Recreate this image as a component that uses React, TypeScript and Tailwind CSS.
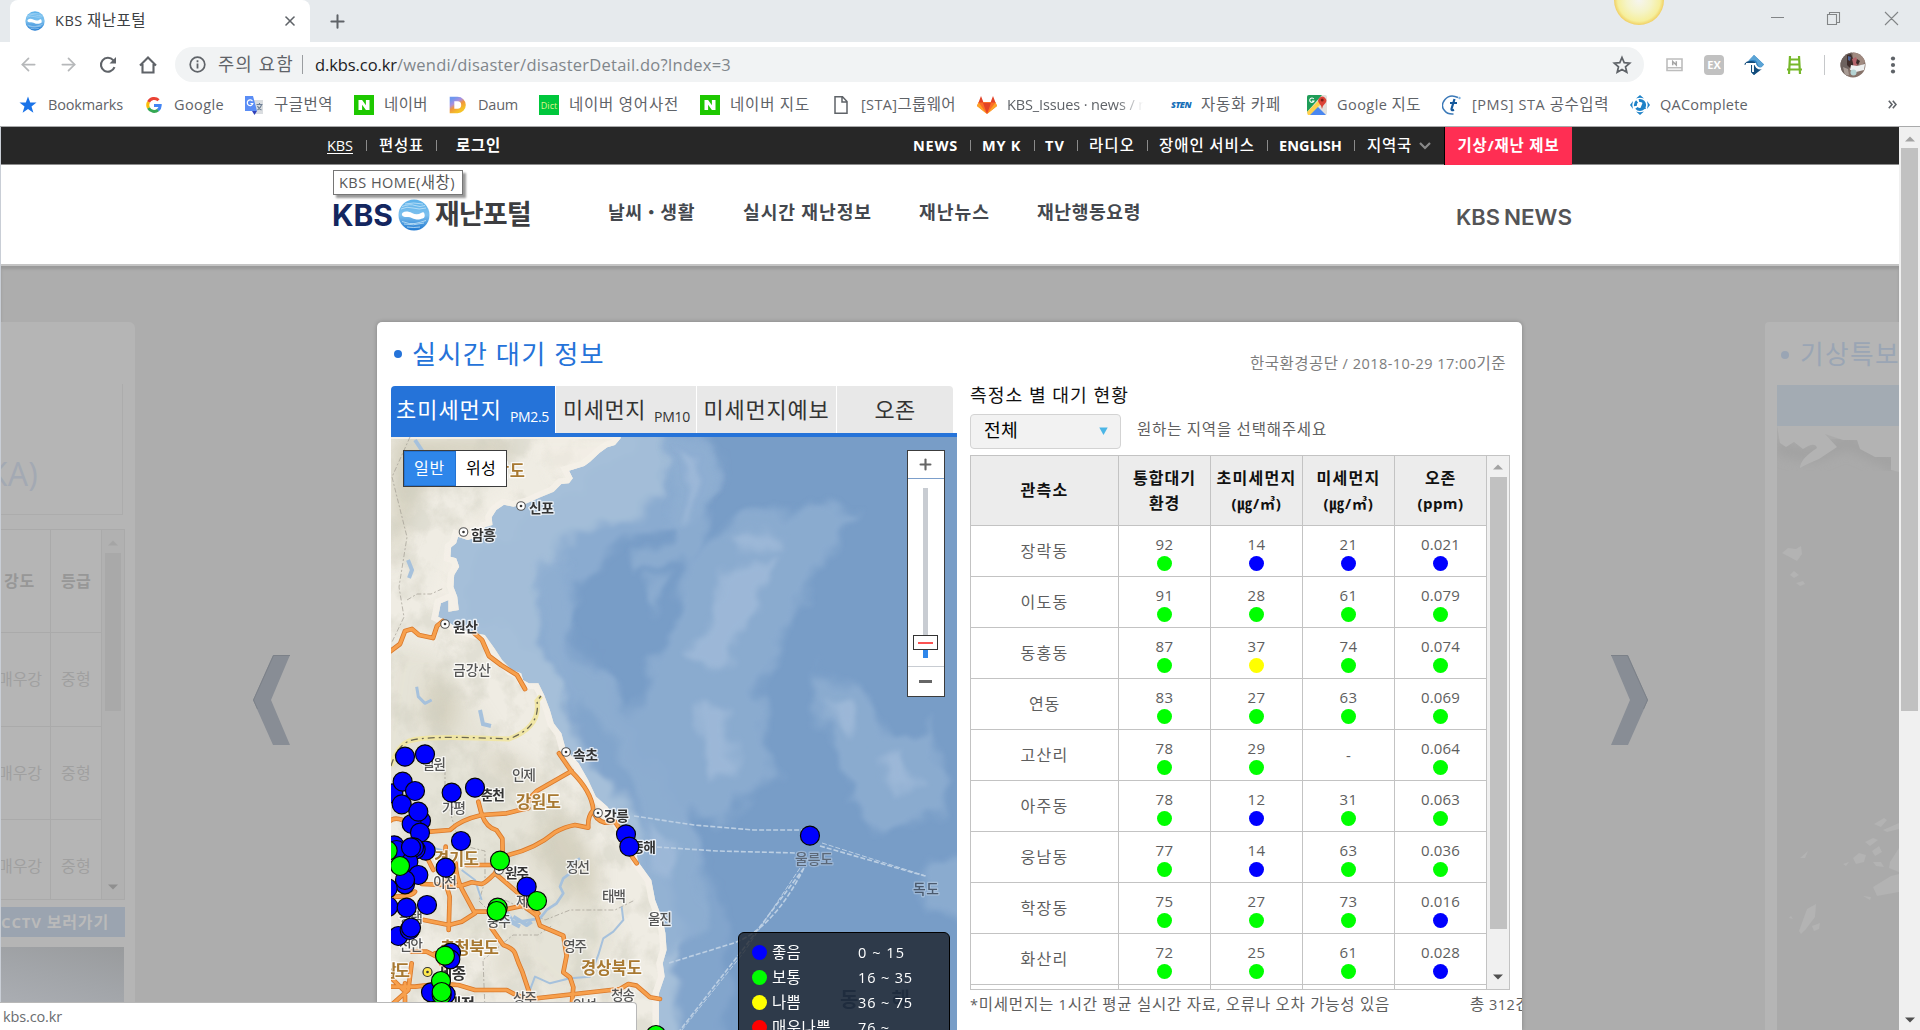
import React, { useLayoutEffect, useRef, useState } from "react";
import { ArrowLeft, ArrowRight, X, Plus } from "lucide-react";

/* Single line of text whose tracking is adjusted so that it spans exactly `w` pixels.
   Hangul runs are set slightly larger than the Latin ones. */
function Fit({ w, children, className = "" }: { w: number; children: string; className?: string }) {
  const ref = useRef<HTMLSpanElement>(null);
  const [ls, setLs] = useState(0);
  useLayoutEffect(() => {
    if (ref.current) {
      const natural = ref.current.getBoundingClientRect().width;
      setLs((w - natural) / children.length);
    }
  }, []);
  return (
    <span className={`block shrink-0 overflow-visible whitespace-pre ${className}`} style={{ width: w }}>
      <span ref={ref} style={{ letterSpacing: ls }}>
        {children.split(/([가-힣]+)/).map((part, i) =>
          i % 2 ? (
            <span key={i} className="text-[1.070em] leading-none">
              {part}
            </span>
          ) : (
            part
          ),
        )}
      </span>
    </span>
  );
}

function Globe({ size }: { size: number }) {
  return (
    <svg width={size} height={size} viewBox="0 0 32 32" className="shrink-0">
      <defs>
        <linearGradient id="globe" x1="0" y1="0" x2="0" y2="1">
          <stop offset="0" stopColor="#5db2ea" />
          <stop offset=".5" stopColor="#7cc0ee" />
          <stop offset="1" stopColor="#1f78d0" />
        </linearGradient>
      </defs>
      <circle cx="16" cy="16" r="15.500" fill="url(#globe)" />
      <path d="M3 10q6-3 12-1t13 0M4 7.500q8-3 13-1t10 0M7 5q8-2 18 0M4 22.500q8 3 13 2t11-3M6 25q9 2 20-1M9 28q7 1 13 0" stroke="#c5e4f8" strokeWidth=".8" fill="none" />
      <path d="M5 13.500c2-1.500 6-1 9 .5s6 2 9 0c2-1.300 3-1 3.500 1 .6 2.500 0 4-2 4.500-2 .4-4 1.500-7 .8-3-.8-5-2.600-8-2.300-3 .2-5-.5-5.500-2-.3-1 0-1.800 1-2.500z" fill="#fff" />
    </svg>
  );
}

function Tri({ down = false, color = "#505050" }: { down?: boolean; color?: string }) {
  return (
    <svg width="10" height="6" viewBox="0 0 10 6" className="block shrink-0">
      <path d={down ? "M0 .5h10L5 5.500z" : "M0 5.500h10L5 .5z"} fill={color} />
    </svg>
  );
}

/* ---------- browser chrome ---------- */

function TabStrip() {
  return (
    <div className="flex h-[42px] shrink-0 bg-[#e6eaed] text-[#3c4043]">
      <div className="ml-[10px] flex h-[42px] w-[300px] items-center rounded-t-[8px] bg-white pl-[15px]">
        <Globe size={20} />
        <Fit w={91} className="ml-[10px] text-[14.500px]">KBS 재난포털</Fit>
        <X className="ml-[136px]" size={16} strokeWidth={2.400} color="#5f6368" />
      </div>
      <div className="flex h-[42px] items-center pl-[17px]">
        <Plus size={21} strokeWidth={2.300} color="#5f6368" />
      </div>
      <svg width="52" height="26" viewBox="0 0 52 26" className="ml-[1265px]">
        <defs>
          <radialGradient id="sun" gradientUnits="userSpaceOnUse" cx="26" cy="0" r="25">
            <stop offset="0" stopColor="#f6f5f0" />
            <stop offset=".5" stopColor="#f5f4c8" />
            <stop offset=".85" stopColor="#f6ef9c" />
            <stop offset="1" stopColor="#f1cf62" />
          </radialGradient>
        </defs>
        <circle cx="26" cy="0" r="25" fill="url(#sun)" />
      </svg>
      <svg width="130" height="16" viewBox="0 0 130 16" className="ml-[105px] mt-[10px]" fill="none" stroke="#828587" strokeWidth="1.100">
        <path d="M1 7.500h13M57.500 4.500h9v10h-9zM59.500 4.500v-2h10v10h-3M115 2l13 13M128 2l-13 13" />
      </svg>
    </div>
  );
}

function Toolbar() {
  return (
    <div className="flex h-[45px] shrink-0 items-center bg-white">
      <ArrowLeft className="ml-[18px]" size={21} strokeWidth={2} color="#b6b8ba" />
      <ArrowRight className="ml-[19px]" size={21} strokeWidth={2} color="#b6b8ba" />
      <svg width="20" height="20" viewBox="0 0 20 20" className="ml-[19px]">
        <path d="M16.500 12.200a7 7 0 1 1-1.300-7.100L17 7" fill="none" stroke="#5f6368" strokeWidth="2.100" />
        <path d="M18 2v6.500h-6.500z" fill="#5f6368" />
      </svg>
      <svg width="20" height="20" viewBox="0 0 20 20" className="ml-[20px]">
        <path d="M2 10.500L10 2.500l8 8M4.500 9v8.500h11V9" fill="none" stroke="#5f6368" strokeWidth="2.100" />
      </svg>
      <div className="ml-[17px] flex h-[35px] w-[1469px] items-center rounded-full bg-[#f1f3f4] pl-[14px] text-[16.500px]">
        <svg width="17" height="17" viewBox="0 0 17 17">
          <circle cx="8.500" cy="8.500" r="7.300" fill="none" stroke="#5f6368" strokeWidth="1.700" />
          <path d="M8.500 7.500v5M8.500 4.300v1.900" stroke="#5f6368" strokeWidth="1.800" />
        </svg>
        <Fit w={76} className="ml-[12px] text-[#5f6368]">주의 요함</Fit>
        <div className="ml-[8px] h-[19px] w-px bg-[#9a9da0]" />
        <Fit w={82} className="ml-[12px] text-[#202124]">d.kbs.co.kr</Fit>
        <Fit w={334} className="text-[#80868b]">/wendi/disaster/disasterDetail.do?Index=3</Fit>
        <svg width="20" height="20" viewBox="0 0 20 20" className="ml-[881px]">
          <path d="M10 2.500l2.200 5.200 5.500.5-4.200 3.600 1.300 5.500L10 14.400l-4.800 2.900 1.300-5.500L2.300 8.200l5.500-.5z" fill="none" stroke="#5f6368" strokeWidth="1.700" />
        </svg>
      </div>
      <svg width="17" height="14" viewBox="0 0 17 14" className="ml-[22px]">
        <path d="M1 1h15v11.500H1zM1 9.800h15" fill="#fff" stroke="#bdbdbd" strokeWidth="1.600" />
        <path d="M6.700 7.300V3.500L10.300 7V3.200" fill="none" stroke="#a5a5a5" strokeWidth="1.500" />
      </svg>
      <div className="ml-[21px] flex h-[20px] w-[20px] items-center justify-center rounded-[4px] bg-[#c1c1c1] text-[11px] font-bold text-white">EX</div>
      <svg width="21" height="20" viewBox="0 0 21 20" className="ml-[20px]">
        <path d="M10 0l10 9.500L10 20l-3-3V9H2z" fill="#2a7fc1" />
        <path d="M10 0l10 9.500-3 3q-3-1-4-5T4 6z" fill="#5ba4d6" />
        <path d="M7 17V9.500H0q1-1.500 3-3 8-1.500 9.500 2.500 1 5 5.500 5L10 20z" fill="#134d7c" />
        <path d="M2 9h9M9 8v9M11 8q1 6 7 5.500" stroke="#fff" strokeWidth="1.900" fill="none" />
      </svg>
      <svg width="17" height="20" viewBox="0 0 17 20" className="ml-[21px]">
        <path d="M4 1L3 19M13 1l1 18M3 4.500h11M3 9.500h11M1 14.500h15" stroke="#76b82a" strokeWidth="2.200" />
      </svg>
      <div className="ml-[21px] h-[20px] w-px bg-[#c6c8ca]" />
      <svg width="26" height="26" viewBox="0 0 26 26" className="ml-[15px]">
        <defs><clipPath id="av"><circle cx="13" cy="13" r="12.500" /></clipPath></defs>
        <g clipPath="url(#av)">
          <rect width="26" height="26" fill="#87736a" />
          <path d="M0 0h12l-5 26H0z" fill="#6d625e" />
          <path d="M13 0l6 1 7 8-5 5-8-6z" fill="#a08a80" />
          <path d="M7 3l4-1 3 7-2 9-5-5z" fill="#3e2c29" />
          <path d="M12 7l4-2 3 7-5 3z" fill="#b4636a" />
          <path d="M8 4l3 1-1 4-2-1z" fill="#4f6698" />
          <path d="M11 13l6 1 8-2-1 6-8 2-6-2z" fill="#eef0f0" />
          <path d="M17 7l3 2-2 4-2-2z" fill="#3b2b28" />
          <circle cx="13.500" cy="20.500" r="3" fill="#b5d3d3" />
          <path d="M3 15l5 2 1 6-4 1z" fill="#a89b94" />
        </g>
      </svg>
      <svg width="6" height="18" viewBox="0 0 6 18" className="ml-[24px]" fill="#5f6368">
        <circle cx="3" cy="2.500" r="2.100" /><circle cx="3" cy="9" r="2.100" /><circle cx="3" cy="15.500" r="2.100" />
      </svg>
    </div>
  );
}

const NaverIcon = () => (
  <svg width="20" height="20" viewBox="0 0 20 20">
    <rect width="20" height="20" fill="#1ec800" />
    <path d="M4.500 15V5h3.600l3.800 5.300V5h3.600v10h-3.600L8.100 9.700V15z" fill="#fff" />
  </svg>
);

const bookmarks: { icon: React.ReactNode; label: string; w: number; fade?: boolean; gap?: string }[] = [
  {
    icon: <svg width="20" height="20" viewBox="0 0 20 20"><path d="M10 1.500l2.200 6h6.300l-5 3.900 1.900 6.400L10 14l-5.400 3.800 1.900-6.400-5-3.900h6.300z" fill="#1a73e8" /></svg>,
    label: "Bookmarks", w: 75,
  },
  {
    icon: (
      <svg width="20" height="20" viewBox="0 0 20 20" fill="none" strokeWidth="3">
        <path d="M14.500 5.200A6.200 6.200 0 0 0 4.500 7" stroke="#ea4335" />
        <path d="M4.500 7a6.500 6.500 0 0 0 0 6" stroke="#fbbc05" />
        <path d="M4.500 13a6.200 6.200 0 0 0 9.700 1.800" stroke="#34a853" />
        <path d="M14 15a6 6 0 0 0 2.200-4.500H10" stroke="#4285f4" />
      </svg>
    ),
    label: "Google", w: 50,
  },
  {
    icon: (
      <svg width="20" height="20" viewBox="0 0 20 20">
        <path d="M8 5h11v14h-8z" fill="#dadde0" />
        <path d="M1 1h8l4 15H1z" fill="#5a8df5" />
        <path d="M8 16h5l-2.500 4z" fill="#3040b8" />
        <path d="M8.500 6.300A2.800 2.800 0 1 0 8.800 8.500H6.500" fill="none" stroke="#fff" strokeWidth="1.200" />
        <path d="M12.500 9.500h6M15.500 8v1.500M17.500 10q-1 3-4 5M13.500 11q1 3 4 4" fill="none" stroke="#6d7f95" strokeWidth="1.100" />
      </svg>
    ),
    label: "구글번역", w: 59, gap: "-ml-px",
  },
  { icon: <NaverIcon />, label: "네이버", w: 44 },
  {
    icon: (
      <svg width="20" height="20" viewBox="0 0 20 20">
        <defs><linearGradient id="daum" x1="0" y1="0" x2=".6" y2="1"><stop offset="0" stopColor="#6f97ee" /><stop offset=".35" stopColor="#a98fe0" /><stop offset=".6" stopColor="#f0953f" /><stop offset="1" stopColor="#f5c227" /></linearGradient></defs>
        <path d="M4 4h5.500a6 6 0 0 1 0 12H4z" fill="none" stroke="url(#daum)" strokeWidth="4.600" />
      </svg>
    ),
    label: "Daum", w: 40, gap: "-ml-px",
  },
  {
    icon: (
      <div className="flex h-[20px] w-[20px] items-end justify-center bg-[linear-gradient(#e8d94c,#e8d94c)_1px_0/4px_5px_no-repeat,#00c73c] bg-[#00c73c] pb-[4px] text-[9px] leading-[10px] text-[#dff58a]">Dict</div>
    ),
    label: "네이버 영어사전", w: 110,
  },
  { icon: <NaverIcon />, label: "네이버 지도", w: 80 },
  {
    icon: <svg width="20" height="20" viewBox="0 0 20 20"><path d="M4 1.800h7.500L16 6.500v11.700H4zM11 2v5h5" fill="none" stroke="#5f6368" strokeWidth="1.500" /></svg>,
    label: "[STA]그룹웨어", w: 95,
  },
  {
    icon: (
      <svg width="20" height="20" viewBox="0 0 20 20">
        <path d="M10 19L0 11 1.500 7h17L20 11z" fill="#fc6d26" />
        <path d="M10 19L6 8h8z" fill="#e24329" />
        <path d="M1.500 7.500L4 1l2.500 6.500zM13.500 7.500L16 1l2.500 6.500z" fill="#e24329" />
        <path d="M0 11l1.500-3.500L10 19zM20 11l-1.500-3.500L10 19z" fill="#fca326" />
      </svg>
    ),
    label: "KBS_Issues · news / n", w: 140, fade: true,
  },
  {
    icon: <div className="flex h-[20px] w-[20px] items-center"><Fit w={20} className="text-[9px] font-extrabold italic text-[#1670b8]">STEN</Fit></div>,
    label: "자동화 카페", w: 80, gap: "ml-[3px]",
  },
  {
    icon: (
      <svg width="20" height="20" viewBox="0 0 20 20">
        <rect width="20" height="20" rx="2" fill="#e2e0dc" />
        <path d="M0 2q0-2 2-2h13L0 17z" fill="#1f9d58" />
        <path d="M2 20l8-9 9 9z" fill="#4a87f0" />
        <path d="M0 17L12 5l3 3L3 20H1z" fill="#ffd04b" />
        <path d="M15 14q-1-4-3-6a4 4 0 1 1 6.500 0Q16 10 15 14z" fill="#dc4437" />
        <circle cx="15.200" cy="5" r="1.500" fill="#7d1f17" />
        <path d="M6.800 4A2.200 2.200 0 1 0 7 6H5" fill="none" stroke="#fff" strokeWidth="1.100" />
      </svg>
    ),
    label: "Google 지도", w: 84, gap: "ml-[5px]",
  },
  {
    icon: (
      <svg width="20" height="20" viewBox="0 0 20 20">
        <path d="M16 2.500Q8-1.500 3 4.500t-.5 11q3 4 9 3.500" fill="none" stroke="#3b79b8" strokeWidth="1.500" />
        <path d="M12.500 4L9.500 14q-.3 2 2.500.8M8 8h7" fill="none" stroke="#15599c" strokeWidth="2.200" />
        <circle cx="17.500" cy="3" r="1.200" fill="#7cb0df" />
      </svg>
    ),
    label: "[PMS] STA 공수입력", w: 137,
  },
  {
    icon: (
      <svg width="20" height="20" viewBox="0 0 20 20" fill="#1d82c8">
        <path d="M10 0l4 3.500q-4-1.500-8 0zM10 20l4-3.500q-4 1.500-8 0zM0 10l3-4q-1.500 4 0 8zM20 10l-3-4q1.500 4 0 8z" />
        <circle cx="10" cy="10" r="4.600" fill="none" stroke="#1d82c8" strokeWidth="3" strokeDasharray="11 2 5 2" />
        <path d="M10 14l3-7 3 7z" />
      </svg>
    ),
    label: "QAComplete", w: 88,
  },
];

function BookmarkBar() {
  return (
    <div className="flex h-[40px] shrink-0 items-center gap-[21px] border-b border-[#a9aaab] bg-white pb-[4px] pl-[18px] text-[14.500px] text-[#5f6368]">
      {bookmarks.map((b, i) => (
        <div key={i} className={`flex shrink-0 items-center gap-[10px] ${b.gap ?? ""} ${b.fade ? "[mask-image:linear-gradient(to_right,#000_82%,transparent_98%)]" : ""}`}>
          <div className="flex w-[20px] shrink-0 justify-center">{b.icon}</div>
          <Fit w={b.w}>{b.label}</Fit>
        </div>
      ))}
      <svg width="9" height="9" viewBox="0 0 9 9" className="ml-[119px]"><path d="M.8.8l3.200 3.700L.8 8.200M4.800.8L8 4.500 4.800 8.200" fill="none" stroke="#5f6368" strokeWidth="1.600" /></svg>
    </div>
  );
}

/* ---------- site header ---------- */

function Sep({ className = "" }: { className?: string }) {
  return <div className={`h-[11px] w-px bg-[#8b8b8b] ${className}`} />;
}

function GlobalBar() {
  return (
    <div className="flex h-[38px] shrink-0 items-center border-b border-[#8d8d8d] bg-[#272727] text-[14.500px] text-white">
      <Fit w={26} className="ml-[326px] underline underline-offset-2">KBS</Fit>
      <Sep className="ml-[13px]" />
      <Fit w={45} className="ml-[12px] font-medium">편성표</Fit>
      <Sep className="ml-[12px]" />
      <Fit w={45} className="ml-[19px] font-bold">로그인</Fit>
      <div className="ml-[412px] flex items-center font-bold">
        <Fit w={45}>NEWS</Fit>
        <Sep className="ml-[12px]" />
        <Fit w={39} className="ml-[11px]">MY K</Fit>
        <Sep className="ml-[13px]" />
        <Fit w={20} className="ml-[10px]">TV</Fit>
        <Sep className="ml-[12px]" />
        <Fit w={46} className="ml-[11px] font-medium">라디오</Fit>
        <Sep className="ml-[12px]" />
        <Fit w={96} className="ml-[11px] font-medium">장애인 서비스</Fit>
        <Sep className="ml-[12px]" />
        <Fit w={63} className="ml-[11px]">ENGLISH</Fit>
        <Sep className="ml-[12px]" />
        <Fit w={45} className="ml-[12px] font-medium">지역국</Fit>
        <svg width="12" height="8" viewBox="0 0 12 8" className="ml-[7px]"><path d="M1 1l5 5 5-5" fill="none" stroke="#8a8a8a" strokeWidth="2.200" /></svg>
      </div>
      <div className="-mb-px ml-[13px] flex h-[38px] w-[128px] items-center justify-center self-start border-l border-black bg-[#ff2e53] font-bold">
        <Fit w={102}>기상/재난 제보</Fit>
      </div>
    </div>
  );
}

function SiteHeader() {
  return (
    <div className="relative flex h-[101px] shrink-0 items-center border-b-2 border-[#c4c4c4] bg-white text-[17px] font-medium text-[#44484e]">
      <div className="ml-[331px] flex items-center">
        <svg width="62" height="30" viewBox="0 0 62 30" className="mt-[2px] overflow-visible">
          <text x="0" y="24.500" fontFamily="Inter, Roboto, sans-serif" fontWeight="700" fontSize="30" textLength="61" lengthAdjust="spacingAndGlyphs" fill="#13265f">KBS</text>
        </svg>
        <div className="ml-[4px]"><Globe size={32} /></div>
        <Fit w={96} className="ml-[5px] text-[25px] font-bold text-[#3c3d40]">재난포털</Fit>
      </div>
      <Fit w={87} className="-mt-[4px] ml-[77px] font-bold">날씨・생활</Fit>
      <Fit w={129} className="-mt-[4px] ml-[48px] font-bold">실시간 재난정보</Fit>
      <Fit w={71} className="-mt-[4px] ml-[47px] font-bold">재난뉴스</Fit>
      <Fit w={104} className="-mt-[4px] ml-[47px] font-bold">재난행동요령</Fit>
      <svg width="118" height="24" viewBox="0 0 118 24" className="ml-[315px] mt-[4px] overflow-visible">
        <g fontFamily="Inter, Roboto, sans-serif" fontWeight="600" fontSize="21.500" fill="#545456">
          <text x="0" y="19.500" textLength="44" lengthAdjust="spacingAndGlyphs">KBS</text>
          <text x="48" y="19.500" textLength="68" lengthAdjust="spacingAndGlyphs">NEWS</text>
        </g>
      </svg>
      <div className="absolute left-[332px] top-[5px] flex h-[25px] w-[130px] items-center border border-[#767676] bg-white pl-[5px] text-[14.500px] font-normal text-[#575757] shadow-[3px_3px_2px_rgba(0,0,0,.4)]">
        <Fit w={116}>KBS HOME(새창)</Fit>
      </div>
    </div>
  );
}

/* ---------- map ---------- */

const blue: [number, number][] = [
  [25, 190], [60, 80], [120, 73], [53, 155], [90, 183], [50, 223], [108, 272], [80, 282], [100, 245], [105, 308],
  [200, 188], [270, 173], [228, 333], [182, 413], [723, 313], [733, 350], [425, 470], [122, 362], [92, 358], [87, 352],
  [70, 395], [28, 346], [35, 360], [78, 352], [100, 435], [60, 463], [60, 450], [8, 475], [10, 530], [65, 533],
  [126, 525], [40, 618], [74, 600], [78, 593], [198, 668], [196, 688], [138, 787], [182, 793], [1275, 317],
];
const green: [number, number][] = [
  [8, 362], [45, 408], [345, 392], [338, 533], [335, 543], [456, 513], [180, 677], [168, 753], [170, 795], [170, 786], [813, 915],
];

type Label = [string, number, number, number, string];
const cities: Label[] = [
  ["신포", 529, 513, 25, "#333"], ["함흥", 471, 540, 25, "#333"], ["원산", 453, 632, 25, "#333"], ["금강산", 453, 675, 38, "#555"],
  ["속초", 573, 760, 25, "#333"], ["인제", 512, 780, 24, "#555"], ["철원", 422, 769, 24, "#555"], ["춘천", 481, 800, 24, "#333"], ["가평", 442, 813, 24, "#555"],
  ["강릉", 604, 821, 25, "#333"], ["동해", 632, 852, 24, "#333"], ["원주", 505, 878, 24, "#333"], ["이천", 433, 887, 24, "#555"],
  ["정선", 566, 872, 24, "#555"], ["제천", 516, 906, 24, "#555"], ["태백", 602, 901, 24, "#555"], ["충주", 487, 926, 24, "#555"],
  ["울진", 648, 924, 24, "#555"], ["평택", 399, 922, 24, "#555"], ["천안", 399, 950, 24, "#555"], ["영주", 563, 951, 24, "#555"],
  ["상주", 513, 1003, 24, "#555"], ["청송", 611, 1000, 24, "#555"], ["안성", 573, 1010, 24, "#555"], ["울릉도", 795, 864, 38, "#5c6878"], ["독도", 913, 894, 26, "#4b5a6e"],
];
const provinces: Label[] = [
  ["강원도", 516, 808, 45, "#a87932"], ["경기도", 434, 865, 45, "#a87932"], ["충청북도", 440, 954, 59, "#a87932"],
  ["경상북도", 581, 974, 61, "#a87932"], ["남도", 382, 977, 28, "#a87932"], ["남도", 494, 477, 31, "#a87932"],
];

const coast =
  "M655 370L655 385 640 405 620 412 600 428 575 455 560 468 520 482 530 505 520 520 500 522 480 545 445 562 410 580 375 590 350 584 330 600 318 622 320 645 300 652 285 680 255 690 230 680 225 700 212 712 210 740 225 745 233 770 220 795 218 830 228 860 232 900 205 905 205 870 185 880 178 920 195 930 230 955 275 970 300 975 325 1015 345 1050 370 1080 395 1090 400 1110 415 1120 440 1120 455 1155 470 1200 480 1240 500 1270 512 1320 545 1360 570 1410 590 1460 620 1490 645 1530 665 1570 695 1620 700 1655 735 1710 745 1770 765 1830 772 1870 775 1920 765 1960 770 2000 755 2050 755 2200L0 2200V370z";

const roads = [
  "M280 215l10 38q14 40 45 48l17 25 1 45-8 20M12 275q15-15 40 -5M135 305l60-5q30-30 95-45l75-5q40-10 65-15M430 215q10-20 25-32l105-60M522 70l38 55q60 60 65 115-18 20-15 53l-40-8q-30 5-60 22-60 50-140 68l-30 12M625 240q5 30 35 38l30-3 30 45q10 50 35 80",
  "M345 395l-15 35q-30 30-40 32l-30-5-30 10-120-5M182 350l-3 100 15 50-3 100M212 400q0 40 20 80l38 70-40 25-38 10-75-15M270 545l60 0 85-18 40 30 10 30 70 30 10 60-10 50 20 15 10 30-8 90M330 430l70 60 60 60M130 390l15 30M345 405h-100",
  "M320 595l35 50q30 10 35 25 10 30 22 55l25 75M80 700l-10 80-45 40M10 770h80q80-10 130-5l50 15h95q50 30 90 25l250-28 25-15 25 5 40 35 30 5M60 760v70M15 740l40 40M150 670l30 50M30 500q50 0 60-15M40 450l-20 40M80 665h45l30 15",
];

function AirMap() {
  return (
    <svg width="566" height="593" viewBox="391 437 566 593" className="absolute inset-0">
      <defs>
        <clipPath id="land"><path d={coast} transform="translate(370 310) scale(.3827 .3333)" /></clipPath>
        <filter id="soft" x="-30%" y="-30%" width="160%" height="160%"><feGaussianBlur stdDeviation="9" /></filter>
        <filter id="soft2" x="-30%" y="-30%" width="160%" height="160%"><feGaussianBlur stdDeviation="4" /></filter>
        <filter id="water" filterUnits="userSpaceOnUse" x="380" y="420" width="600" height="630">
          <feTurbulence type="fractalNoise" baseFrequency=".02" numOctaves="3" seed="4" result="n" />
          <feGaussianBlur in="SourceGraphic" stdDeviation="3" result="b" />
          <feDisplacementMap in="b" in2="n" scale="42" xChannelSelector="R" yChannelSelector="G" />
          <feGaussianBlur stdDeviation="1.500" />
        </filter>
        <filter id="relief" x="0" y="0" width="100%" height="100%">
          <feTurbulence type="fractalNoise" baseFrequency=".035 .03" numOctaves="5" seed="8" />
          <feColorMatrix values="0 0 0 0 .62  0 0 0 0 .61  0 0 0 0 .52  4 0 0 0 -1.800" />
        </filter>
      </defs>
      <rect x="391" y="437" width="566" height="593" fill="#789dc7" />
      {/* shallow water along the coast */}
      <g filter="url(#water)">
        <g transform="translate(370 310) scale(.3827 .3333)">
          <path d={coast} fill="none" stroke="#86a8ce" strokeWidth="330" opacity=".7" />
          <path d="M640 350h250l10 160-30 80-60 60-90 10-180 130-20 200-10 200 60 180 100 160 80 200L300 1000 200 860 230 690 370 590 500 520z" fill="#8aabd0" />
          <path d="M640 350h130l0 140-60 120-110 30-110 60-40 140-20 160 40 140 60 120 80 220 60 200L300 1000 200 860 230 690 370 590 500 520z" fill="#a3bdd8" />
          <path d={coast} fill="none" stroke="#a5bfd9" strokeWidth="90" />
        </g>
      </g>
      {/* lighter sea ridges */}
      <g fill="#8fafd2" filter="url(#water)" opacity=".8">
        <path d="M665 435h38l8 40 0 50-20 50-25-10z" />
        <path d="M705 545q40-40 90-35l60 0-30 50-30 50-35 60-20 90-50 40-60-30 20-100z" />
        <path d="M785 515q30-15 57-3l-22 45-30-5z" />
        <path d="M637 548l32 0 12 20-44 8zM650 580l20 5-16 25-10-10z" />
        <path d="M690 670l60 20 20 80-40 50-60-20-8-70z" />
        <path d="M815 670l55 20 10 70-30 30-30-50zM860 740l70-20 15 100-55 10-40-30z" />
        <path d="M540 560l25 0 10 80 5 80-35-65z" />
        <path d="M920 860l57 0v60l-60-10z" />
        <path d="M630 750l50 50 30 70-10 60-50 30-10-100z" />
        <path d="M560 650l50 30 40 60-20 20-50-60z" />
      </g>
      <g fill="#a2bcda" filter="url(#water)" opacity=".75">
        <path d="M735 570l40-20-20 70-50 60-20-20zM735 535l45-10 0 14-40 14zM700 700l30 10 12 60-30 10zM678 450l14 10 0 30-10 40zM828 690l24 10-5 40-20-20zM880 760l24-10 8 40-18 5zM650 820l25 30 0 40-20-20z" />
      </g>
      {/* land */}
      <path d={coast} transform="translate(370 310) scale(.3827 .3333)" fill="#efece3" />
      <g clipPath="url(#land)">
        <g fill="#c4c0a9" filter="url(#soft)" opacity=".6">
          <path d="M391 437h120l-20 18-50 8-20 30-30 80z" />
          <path d="M391 640l50 15 40 60 40 60 60 80 40 90-60 60-60-60-50 10-10-90-70-100z" opacity=".35" />
          <path d="M430 670l30 30-10 40-25-20zM560 800l40 70-10 40-30-30-30-30zM460 440l60 4-20 20-50-10z" />
          <path d="M480 760l30-10 40 30-20 20zM490 960l30-20 0 20-20 30z" opacity=".6" />
        </g>
        <rect x="391" y="437" width="290" height="593" filter="url(#relief)" opacity=".42" />
        <path d="M530 437h110v12l-90 34zM425 600l30-70 30-28 30-20-8 25-34 25-18 60 5 50z" fill="#f3efe6" opacity=".6" filter="url(#soft2)" />
        <path d={coast} transform="translate(370 310) scale(.3827 .3333)" fill="none" stroke="#f4f0e8" strokeWidth="34" opacity=".9" />
        <g fill="none" stroke="#9a968c" strokeWidth=".8" strokeDasharray="5 2 2 2" opacity=".8">
          <path d="M410 437l-18 40 15 60-8 50 5 30-12 25M407 600l10-6 14 0 13-6M445 770v25l15 50 25 6 0 30-6 20 20 20M505 900l40 20 25-10 20 0 25 0 20-10M485 1010l-2-50 30-25 25 0 15-10" />
        </g>
        {/* rivers */}
        <g transform="translate(385 730) scale(.3333)" fill="none" stroke="#a6c1dc" strokeLinejoin="round">
          <path d="M585 385l-25 15-5 30-20 15-10 25 10 20-20 30-30 20-20 25-60 10-40 0-20-20" strokeWidth="8" />
          <path d="M365 545l20 35 20 10M385 560l40 25 15-10" strokeWidth="12" />
          <path d="M710 530l5 40-30 35-30 20-15 50-25 65-60 5-60 15-45-20-15 40M230 420l40 30 20 60M130 350l40 10-10 20" strokeWidth="6" />
          <path d="M95-130l5 30 20 20 20-10M400-5" strokeWidth="9" />
        </g>
        <path d="M408 560l4 10-3 8M415 440l8 12M480 710l3 14 8 2" fill="none" stroke="#a6c1dc" strokeWidth="4" />
        {/* armistice line */}
        <path d="M391 766q6-20 18-25 15-6 100-2 32-12 28-38l4-5" fill="none" stroke="#f0e6a6" strokeWidth="5" />
        <path d="M391 766q6-20 18-25 15-6 100-2 32-12 28-38l4-5" fill="none" stroke="#6b6752" strokeWidth="1.300" strokeDasharray="7 4 2 4" />
      </g>
      {/* roads */}
      {["#d9782a", "#f7a04d"].map((c, i) => (
        <g key={c} fill="none" stroke={c} strokeLinecap="round" strokeLinejoin="round">
          <g transform="translate(385 730) scale(.3333)" strokeWidth={i ? 9 : 14}>
            {roads.map((d) => (
              <path key={d} d={d} />
            ))}
          </g>
          <path d="M388 653l12-9 5-13 7-2 7 6 14 3 4-12 6-5M474 633l8 7 7 16 12 9 16 10 8 14" strokeWidth={i ? 3.200 : 4.800} />
        </g>
      ))}
      {/* ferry routes */}
      <g fill="none" stroke="#bccfe3" strokeWidth="1.600" strokeDasharray="5 2">
        <path d="M634 816l60 9 60 5 50 0M657 847l60 4 80 2M820 846l105 30M804 868l-60 80-70 90M804 868q-30 60-70 75l-65 20" />
        <path d="M822 843l104 33M800 868l-56 84-70 88" strokeWidth="1" />
      </g>
      {/* town rings */}
      {[[521, 506], [463.500, 532], [445, 624], [566, 752], [598, 813], [499, 870]].map(([x, y]) => (
        <g key={x}>
          <circle cx={x} cy={y} r="4.300" fill="#fff" stroke="#555" strokeWidth="1.100" />
          <circle cx={x} cy={y} r="1.300" fill="#333" />
        </g>
      ))}
      <circle cx="427.500" cy="972" r="4.500" fill="#ffe94d" stroke="#333" strokeWidth="1.200" />
      <circle cx="427.500" cy="972" r="1.300" fill="#333" />
      <g fontFamily="'Noto Sans CJK KR', sans-serif" paintOrder="stroke" stroke="#fff" strokeOpacity=".75" strokeWidth="2.600" strokeLinejoin="round">
        {cities.map(([t, x, y, w, c]) => (
          <text key={t + x} x={x} y={y} textLength={w} fontSize="13.800" fontWeight={c === "#333" ? 700 : 500} fill={c} strokeOpacity={x > 780 ? 0.25 : 0.75}>{t}</text>
        ))}
        {provinces.map(([t, x, y, w, c]) => (
          <text key={t + x} x={x} y={y} textLength={w} fontSize="16.500" fontWeight="700" fill={c}>{t}</text>
        ))}
        <text x="438" y="979" fontSize="15.500" fontWeight="700" fill="#333" textLength="28">세종</text>
        <text x="447" y="1010" fontSize="15.500" fontWeight="700" fill="#333" textLength="28">대전</text>
        <text x="840" y="1007" fontSize="20" fontWeight="700" fill="#3a5f95" textLength="70" strokeWidth="0">동 해</text>
      </g>
      <g transform="translate(385 730) scale(.3333)" stroke="#050505" strokeWidth="3.500">
        {blue.map(([x, y], i) => (
          <circle key={i} cx={x} cy={y} r="28.500" fill="#0000fe" />
        ))}
        {green.map(([x, y], i) => (
          <circle key={i} cx={x} cy={y} r="28.500" fill="#00fe00" />
        ))}
      </g>
    </svg>
  );
}

const legend = [
  { dot: "bg-[#00f]", name: "좋음", nw: 29, range: "0 ~ 15", rw: 47 },
  { dot: "bg-[#0f0]", name: "보통", nw: 29, range: "16 ~ 35", rw: 55 },
  { dot: "bg-[#ff0]", name: "나쁨", nw: 29, range: "36 ~ 75", rw: 55 },
  { dot: "bg-[#f00]", name: "매우나쁨", nw: 59, range: "76 ~", rw: 32 },
];

function MapPanel() {
  return (
    <div className="relative h-[593px] w-[566px] overflow-hidden">
      <AirMap />
      <div className="absolute left-[12px] top-[13px] flex h-[37px] w-[104px] border border-[#3c3c3c] bg-white text-[15px] leading-none text-black">
        <div className="flex w-[52px] items-center justify-center border-r border-[#3c3c3c] bg-[#2e86ea] text-white outline-1 -outline-offset-1 outline-[#2373d3]">
          <Fit w={31}>일반</Fit>
        </div>
        <div className="flex flex-1 items-center justify-center"><Fit w={30}>위성</Fit></div>
      </div>
      <div className="absolute left-[516px] top-[13px] flex h-[247px] w-[38px] flex-col items-center border border-[#3c3c3c] bg-white">
        <div className="flex h-[28px] w-full items-center justify-center border-b border-[#7c9fcb] pr-px">
          <Plus size={17} strokeWidth={3} color="#666" />
        </div>
        <div className="flex w-full flex-1 flex-col items-center pr-[2px] pt-[9px]">
          <div className="h-[147px] w-[5px] bg-[#c8ccd2]" />
          <div className="z-10 flex h-[15px] w-[25px] shrink-0 items-center justify-center border border-[#333] bg-white">
            <div className="h-[2px] w-[15px] bg-[#fb5252]" />
          </div>
          <div className="-mt-[2px] h-[10px] w-[5px] bg-[#2e86ea]" />
        </div>
        <div className="flex h-[30px] w-full items-center justify-center border-t border-[#c8ccd2] pr-px">
          <div className="h-[3px] w-[13px] bg-[#666]" />
        </div>
      </div>
      <div className="absolute left-[347px] top-[495px] flex h-[130px] w-[212px] flex-col rounded-[6px] border border-black bg-[rgba(24,29,36,.77)] pl-[13px] pt-[7px] text-[14.500px] text-white">
        {legend.map((l) => (
          <div key={l.name} className="flex h-[25px] shrink-0 items-center">
            <div className={`mr-[5px] h-[15px] w-[15px] rounded-full ${l.dot}`} />
            <div className="w-[86px]"><Fit w={l.nw}>{l.name}</Fit></div>
            <Fit w={l.rw}>{l.range}</Fit>
          </div>
        ))}
      </div>
    </div>
  );
}

/* ---------- air quality card ---------- */

const dots: Record<string, string> = { g: "bg-[#0f0]", b: "bg-[#00f]", y: "bg-[#ff0]" };
const stations: [string, number, [string, string][]][] = [
  ["장락동", 48, [["92", "g"], ["14", "b"], ["21", "b"], ["0.021", "b"]]],
  ["이도동", 48, [["91", "g"], ["28", "g"], ["61", "g"], ["0.079", "g"]]],
  ["동홍동", 48, [["87", "g"], ["37", "y"], ["74", "g"], ["0.074", "g"]]],
  ["연동", 31, [["83", "g"], ["27", "g"], ["63", "g"], ["0.069", "g"]]],
  ["고산리", 48, [["78", "g"], ["29", "g"], ["-", ""], ["0.064", "g"]]],
  ["아주동", 48, [["78", "g"], ["12", "b"], ["31", "g"], ["0.063", "g"]]],
  ["웅남동", 48, [["77", "g"], ["14", "b"], ["63", "g"], ["0.036", "g"]]],
  ["학장동", 48, [["75", "g"], ["27", "g"], ["73", "g"], ["0.016", "b"]]],
  ["화산리", 48, [["72", "g"], ["25", "g"], ["61", "g"], ["0.028", "b"]]],
];
const cols = "grid grid-cols-[148px_92px_92px_92px_92px]";
const cell = "flex flex-col items-center border-r border-b border-[#c3c3c3]";

function StationTable() {
  return (
    <div className="mt-[6px] flex h-[535px] w-[540px] overflow-hidden border border-[#c3c3c3]">
      <div className="w-[516px] shrink-0">
        <div className={`${cols} h-[70px] bg-[#ececec] text-[15px] font-bold leading-[25px] text-[#111]`}>
          <div className={`${cell} justify-center`}><Fit w={48}>관측소</Fit></div>
          <div className={`${cell} justify-center`}><Fit w={63}>통합대기</Fit><Fit w={31}>환경</Fit></div>
          <div className={`${cell} justify-center`}><Fit w={80}>초미세먼지</Fit><Fit w={50}>(㎍/㎥)</Fit></div>
          <div className={`${cell} justify-center`}><Fit w={64}>미세먼지</Fit><Fit w={50}>(㎍/㎥)</Fit></div>
          <div className={`${cell} justify-center`}><Fit w={31}>오존</Fit><Fit w={46}>(ppm)</Fit></div>
        </div>
        {stations.map(([name, w, vals]) => (
          <div key={name} className={`${cols} h-[51px] text-[15px] text-[#5e5e5e]`}>
            <div className={`${cell} justify-center`}><Fit w={w}>{name}</Fit></div>
            {vals.map(([v, c], i) => (
              <div key={i} className={`${cell} ${c ? "pt-[9px]" : "justify-center"}`}>
                {c ? <Fit w={v.length > 2 ? 39 : 18} className="leading-[18px]">{v}</Fit> : <span>-</span>}
                {c && <div className={`mt-[3px] h-[15px] w-[15px] rounded-full ${dots[c]}`} />}
              </div>
            ))}
          </div>
        ))}
        <div className={`${cols} h-[51px]`}>
          {[0, 1, 2, 3, 4].map((i) => <div key={i} className={cell} />)}
        </div>
      </div>
      <div className="flex flex-1 flex-col items-center bg-[#f0f0f0] pt-[8px]">
        <Tri color="#a3a3a3" />
        <div className="mt-[7px] h-[452px] w-[17px] bg-[#c1c1c1]" />
        <div className="mt-[45px]"><Tri down /></div>
      </div>
    </div>
  );
}

function MainCard() {
  return (
    <div className="flex h-[708px] w-[1145px] shrink-0 overflow-hidden rounded-t-[5px] bg-white shadow-[0_0_4px_rgba(0,0,0,.25)]">
      <div className="ml-[14px] w-[566px] shrink-0">
        <div className="flex h-[64px] items-center pl-[3px]">
          <div className="h-[8px] w-[8px] rounded-full bg-[#2573d9]" />
          <Fit w={193} className="ml-[10px] mt-[2px] text-[24.500px] leading-[28px] text-[#2573d9]">실시간 대기 정보</Fit>
        </div>
        <div className="flex h-[51px] gap-px border-b-4 border-[#2573d9] text-[20.500px] text-[#333]">
          <div className="flex w-[164px] items-center rounded-tl-[4px] bg-[#2573d9] pl-[5px] text-white">
            <Fit w={106}>초미세먼지</Fit>
            <Fit w={39} className="ml-[8px] mt-[14px] text-[14px]">PM2.5</Fit>
          </div>
          <div className="flex w-[140px] items-center bg-[#e8e8e8] pl-[7px]">
            <Fit w={83}>미세먼지</Fit>
            <Fit w={36} className="ml-[8px] mt-[14px] text-[14px]">PM10</Fit>
          </div>
          <div className="flex w-[139px] items-center justify-center bg-[#e8e8e8]"><Fit w={126}>미세먼지예보</Fit></div>
          <div className="flex w-[116px] items-center justify-center rounded-tr-[4px] bg-[#e8e8e8]"><Fit w={41}>오존</Fit></div>
        </div>
        <MapPanel />
      </div>
      <div className="ml-[13px] w-[552px] shrink-0">
        <div className="flex h-[60px] items-end justify-end pb-[8px] pr-[16px] text-[14.500px] leading-[20px] text-[#7d7d7d]">
          <Fit w={256}>한국환경공단 / 2018-10-29 17:00기준</Fit>
        </div>
        <Fit w={159} className="h-[32px] text-[17px] leading-[28px] text-[#111]">측정소 별 대기 현황</Fit>
        <div className="flex items-center">
          <div className="flex h-[35px] w-[151px] items-center justify-between rounded-[4px] border border-[#d3d3d3] bg-[#f2f2f2] pb-[2px] pl-[13px] pr-[12px] text-[17px] leading-none text-black">
            <Fit w={34}>전체</Fit>
            <svg width="9" height="8" viewBox="0 0 9 8"><path d="M.3 .5h8.400L4.500 8z" fill="#4cb6e6" /></svg>
          </div>
          <Fit w={190} className="-mt-[4px] ml-[16px] text-[14.500px] text-[#606060]">원하는 지역을 선택해주세요</Fit>
        </div>
        <StationTable />
        <div className="flex justify-between pt-[5px] text-[14.500px] leading-[20px] text-[#5e5e5e]">
          <Fit w={420}>*미세먼지는 1시간 평균 실시간 자료, 오류나 오차 가능성 있음</Fit>
          <Fit w={60} className="-mr-[8px]">총 312건</Fit>
        </div>
      </div>
    </div>
  );
}

/* ---------- neighbouring cards in the carousel ---------- */

function LeftPeek() {
  const row = "flex shrink-0 border-b border-[#aaa]";
  return (
    <div className="h-[708px] w-[134px] shrink-0 overflow-hidden rounded-tr-[6px] bg-[#b5b5b5] text-[15px] text-[#a0a0a0]">
      <div className="mt-[62px] flex h-[131px] w-[122px] items-center justify-end border-b border-r border-[#acacac] pr-[84px] pt-[50px] text-[32px] text-[#a3a9b3]">
        <Fit w={60}>(KA)</Fit>
      </div>
      <div className="mt-[14px] flex h-[371px] w-[124px] overflow-hidden border-r border-b border-t border-[#aaa]">
        <div className="w-[101px] shrink-0 overflow-hidden">
          <div className={`${row} h-[103px] font-bold text-[#979797]`}>
            <div className="flex w-[50px] items-center border-r border-[#aaa] pl-[3px]"><Fit w={31}>강도</Fit></div>
            <div className="flex flex-1 items-center justify-center border-r border-[#aaa]"><Fit w={30}>등급</Fit></div>
          </div>
          {[0, 1, 2].map((i) => (
            <div key={i} className={`${row} h-[93.500px]`}>
              <div className="flex w-[50px] items-center justify-end border-r border-[#aaa] pr-[8px]"><Fit w={44}>매우강</Fit></div>
              <div className="flex flex-1 items-center justify-center border-r border-[#aaa]"><Fit w={30}>중형</Fit></div>
            </div>
          ))}
        </div>
        <div className="flex flex-1 flex-col items-center bg-[#b1b1b1] pt-[10px]">
          <Tri color="#a5a5a5" />
          <div className="mt-[7px] h-[158px] w-[16px] bg-[#a9a9a9]" />
          <div className="mt-[173px]"><Tri down color="#8f8f8f" /></div>
        </div>
      </div>
      <div className="mt-[7px] flex h-[30px] w-[124px] items-center justify-end bg-[#9ba4b0] pr-[16px] font-bold text-[#bababa]">
        <Fit w={108}>CCTV 보러가기</Fit>
      </div>
      <div className="mt-[10px] h-[84px] w-[123px] bg-[linear-gradient(15deg,#a9acb1_30%,#a2a5a9_60%,#999b9d)]" />
    </div>
  );
}

function RightPeek() {
  return (
    <div className="h-[708px] w-[134px] shrink-0 overflow-hidden rounded-tl-[4px] bg-[#b5b5b5]">
      <div className="flex h-[63px] items-center pl-[16px] pt-[2px] text-[24px] text-[#9aa5b4]">
        <div className="h-[8px] w-[8px] shrink-0 rounded-full bg-[#9aa5b4]" />
        <Fit w={100} className="ml-[11px]">기상특보</Fit>
      </div>
      <div className="ml-[12px] h-[41px] bg-[#a3abb3]" />
      <svg width="122" height="604" viewBox="0 0 122 604" className="ml-[12px] block">
        <defs><filter id="shade"><feGaussianBlur stdDeviation="6" /></filter></defs>
        <rect width="122" height="604" fill="#aaaaaa" />
        <path d="M0 20q20 10 40 8l30-12 40 18 12 8" stroke="#a0a0a0" strokeWidth="12" fill="none" filter="url(#shade)" />
        <g fill="#b3b3b3">
          <path d="M0 0h122v46l-8-2v-13H98l-15-8-3-9H66l-18-6 12 13-18 12q-12 5-19 9 0-9 17-20-2-7-14 1l-9-7-8 5-6-4z" />
          <path d="M5 127l6-5 8 1 5-3 1 8-5 7zM13 149l4-4 5 4-5 3zM19 157l7-2 2 3-5 2zM76 432l6-5 7 2-2 7-8 2zM88 416l8-4 5 2-8 6zM97 398l10-6 3 2-6 7zM96 461l18-11 8-2v18l-22 4zM113 436l9-14v24l-10-4zM106 404l16-7v6l-12 3zM22 505l8-22 9-5-1 13-9 12-5 5zM35 500l8-3-1 6-5 2zM12 492l2-2 2 3zM23 432l8-7-3 7z" />
          <path d="M95 425l7-5 3 6-7 4zM96 436l8 0 3 5-8-1zM66 438l6-2-3 4zM86 470l8 1-1 3z" />
        </g>
      </svg>
    </div>
  );
}

function Chevron({ flip = false }: { flip?: boolean }) {
  return (
    <svg width="38" height="91" viewBox="0 0 38 91" className={`mt-[333px] shrink-0 ${flip ? "-scale-x-100" : ""}`}>
      <path d="M37 0H20L0 45l20 45h17L18 45z" fill="#888d95" />
      <path d="M37 .5H20.500L.5 45l4 9" fill="none" stroke="#7c8188" />
    </svg>
  );
}

export default function App() {
  return (
    <div className="relative flex h-[1030px] w-[1920px] flex-col overflow-hidden bg-white font-['Open_Sans','Noto_Sans_CJK_KR',sans-serif] leading-[20px]">
      <TabStrip />
      <Toolbar />
      <BookmarkBar />
      <div className="flex h-[903px] shrink-0">
        <div className="w-px shrink-0 bg-[#c9ced6]" />
        <div className="flex w-[1898px] shrink-0 flex-col overflow-hidden">
          <GlobalBar />
          <SiteHeader />
          <div className="flex flex-1 bg-[#adadad] pt-[56px] shadow-[inset_0_3px_3px_rgba(0,0,0,.12)]">
            <LeftPeek />
            <div className="w-[118px] shrink-0" />
            <Chevron />
            <div className="w-[86px] shrink-0" />
            <MainCard />
            <div className="w-[88px] shrink-0" />
            <Chevron flip />
            <div className="w-[117px] shrink-0" />
            <RightPeek />
          </div>
        </div>
        <div className="flex w-[21px] shrink-0 flex-col items-center bg-[#f0f0f0] pt-[9px]">
          <Tri color="#a3a3a3" />
          <div className="mt-[6px] h-[563px] w-[17px] bg-[#c1c1c1]" />
          <div className="mt-[306px]"><Tri down /></div>
        </div>
      </div>
      <div className="absolute bottom-0 left-0 flex h-[28px] w-[637px] items-center rounded-tr-[4px] border-r border-t border-[#b8b8b8] bg-white pl-[3px] text-[14.500px] text-[#6a6d70]">
        <Fit w={59}>kbs.co.kr</Fit>
      </div>
    </div>
  );
}
